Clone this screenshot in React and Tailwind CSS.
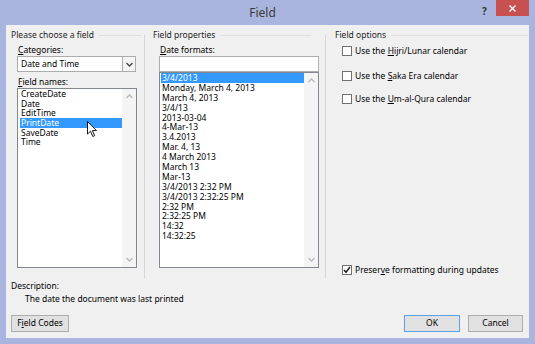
import React from 'react'

const names = ['CreateDate', 'Date', 'EditTime', 'PrintDate', 'SaveDate', 'Time']
const formats = [
  '3/4/2013', 'Monday, March 4, 2013', 'March 4, 2013', '3/4/13', '2013-03-04', '4-Mar-13',
  '3.4.2013', 'Mar. 4, 13', '4 March 2013', 'March 13', 'Mar-13', '3/4/2013 2:32 PM',
  '3/4/2013 2:32:25 PM', '2:32 PM', '2:32:25 PM', '14:32', '14:32:25',
]

function Chevron({ up, color = '#b8b8b8' }) {
  return (
    <svg width="7" height="5" viewBox="0 0 7 5">
      <path d={up ? 'M0.5 4 L3.5 1 L6.5 4' : 'M0.5 1 L3.5 4 L6.5 1'} stroke={color} strokeWidth="1.3" fill="none" />
    </svg>
  )
}

function ScrollStrip() {
  return (
    <div className="w-[14px] bg-[#f4f4f4] flex flex-col items-center justify-between py-[5px]">
      <Chevron up />
      <Chevron />
    </div>
  )
}

function GroupHead({ label, pad }) {
  return (
    <div className={`flex items-center h-[10px] ${pad}`}>
      <span className="leading-[10px] text-[#1e1e1e]">{label}</span>
      <div className="flex-1 h-px bg-[#e0e0e0] ml-[5px]" />
    </div>
  )
}

function Check({ checked, children }) {
  return (
    <div className="flex items-center h-[10px] ml-[7px]">
      <div className="w-[10px] h-[10px] border border-[#707070] bg-white flex items-center justify-center">
        {checked && (
          <svg width="8" height="8" viewBox="0 0 8 8">
            <path d="M1 4 L3 6.3 L7 1" stroke="#222" strokeWidth="1.5" fill="none" />
          </svg>
        )}
      </div>
      <span className="ml-[3px] leading-[10px]">{children}</span>
    </div>
  )
}

function Btn({ w, children, focus }) {
  return (
    <div className={`${w} h-[17px] flex items-center justify-center bg-[#e1e1e1] border ${focus ? 'border-[#5aa0e6]' : 'border-[#adadad]'}`}>
      {children}
    </div>
  )
}

export default function App() {
  return (
    <div className="w-[535px] h-[344px] bg-[#aab5df] flex flex-col text-[8.5px] text-black font-['Noto_Sans',sans-serif] relative overflow-hidden">
      {/* title bar */}
      <div className="h-[25px] flex items-start relative">
        <div className="flex-1 flex justify-center pt-[5px] pr-[10px]">
          <span className="text-[12px] leading-[16px] text-[#3a3a3a]">Field</span>
        </div>
        <span className="absolute left-[482px] top-[4px] text-[10px] font-bold text-[#333]">?</span>
        <div className="absolute left-[496px] top-0 w-[33px] h-[16px] bg-[#c75050] flex items-center justify-center">
          <svg width="7" height="7" viewBox="0 0 7 7">
            <path d="M0.5 0.5 L6.5 6.5 M6.5 0.5 L0.5 6.5" stroke="white" strokeWidth="1.4" />
          </svg>
        </div>
      </div>

      {/* body */}
      <div className="mx-[6px] h-[313px] bg-[#f0f0f0] flex flex-col">
        <div className="flex h-[253px] pt-[5px]">
          {/* column 1 */}
          <div className="w-[138px] flex flex-col">
            <GroupHead label="Please choose a field" pad="pl-[5px] pr-[3px]" />
            <div className="mt-[5px] ml-[12px] leading-[10px]"><u>C</u>ategories:</div>
            <div className="mt-px ml-[11px] w-[119px] h-[16px] bg-white border border-[#acacac] flex">
              <span className="flex-1 pl-[3px] leading-[14px]">Date and Time</span>
              <div className="w-[13px] border-l border-[#acacac] bg-[#f4f4f4] flex items-center justify-center">
                <Chevron color="#444" />
              </div>
            </div>
            <div className="mt-[5px] ml-[12px] leading-[10px]"><u>F</u>ield names:</div>
            <div className="mt-px ml-[11px] w-[120px] h-[180px] bg-white border border-[#828790] flex">
              <div className="flex-1 pl-[2px]">
                {names.map(n => (
                  <div
                    key={n}
                    className={`h-[9.7px] leading-[9.7px] pl-px ${n === 'PrintDate' ? 'bg-[#3399ff] text-white' : ''}`}
                  >
                    {n}
                  </div>
                ))}
              </div>
              <ScrollStrip />
            </div>
          </div>
          <div className="w-px h-[243px] mt-[5px] bg-[#d5d5d5]" />

          {/* column 2 */}
          <div className="w-[180px] flex flex-col">
            <GroupHead label="Field properties" pad="pl-[8px] pr-[14px]" />
            <div className="mt-[5px] ml-[15px] leading-[10px]"><u>D</u>ate formats:</div>
            <div className="mt-px ml-[14px] w-[160px] h-[16px] bg-white border border-[#abadb3]" />
            <div className="ml-[14px] w-[160px] h-[196px] bg-white border border-[#828790] flex">
              <div className="flex-1 pl-px">
                {formats.map((f, i) => (
                  <div
                    key={f}
                    className={`h-[9.9px] leading-[9.9px] pl-px ${i === 0 ? 'bg-[#3399ff] text-white' : ''}`}
                  >
                    {f}
                  </div>
                ))}
              </div>
              <ScrollStrip />
            </div>
          </div>
          <div className="w-px h-[243px] mt-[5px] bg-[#d5d5d5]" />

          {/* column 3 */}
          <div className="flex-1 flex flex-col">
            <GroupHead label="Field options" pad="pl-[9px] pr-px" />
            <div className="pl-[9px] flex flex-col">
              <div className="mt-[6px]"><Check>Use the <u>H</u>ijri/Lunar calendar</Check></div>
              <div className="mt-[15px]"><Check>Use the <u>S</u>aka Era calendar</Check></div>
              <div className="mt-[13px]"><Check>Use the <u>U</u>m-al-Qura calendar</Check></div>
              <div className="mt-[161px]"><Check checked>Preser<u>v</u>e formatting during updates</Check></div>
            </div>
          </div>
        </div>

        {/* description */}
        <div className="mt-[3px] ml-[5px] leading-[10px]">Description:</div>
        <div className="mt-[3px] ml-[19px] leading-[10px]">The date the document was last printed</div>

        {/* buttons */}
        <div className="mt-[11px] flex items-center px-[5px] pr-[6px]">
          <Btn w="w-[58px]">F<u>i</u>eld Codes</Btn>
          <div className="flex-1" />
          <Btn w="w-[56px]" focus>OK</Btn>
          <div className="w-[8px]" />
          <Btn w="w-[55px]">Cancel</Btn>
        </div>
      </div>

      {/* mouse pointer */}
      <svg className="absolute left-[87px] top-[121px]" width="11" height="17" viewBox="0 0 11 17">
        <path d="M0.5 0.5 L0.5 13 L3.5 10.2 L5.8 15.5 L7.6 14.7 L5.4 9.6 L9.5 9.6 Z" fill="white" stroke="black" strokeWidth="0.9" strokeLinejoin="round" />
      </svg>
    </div>
  )
}
